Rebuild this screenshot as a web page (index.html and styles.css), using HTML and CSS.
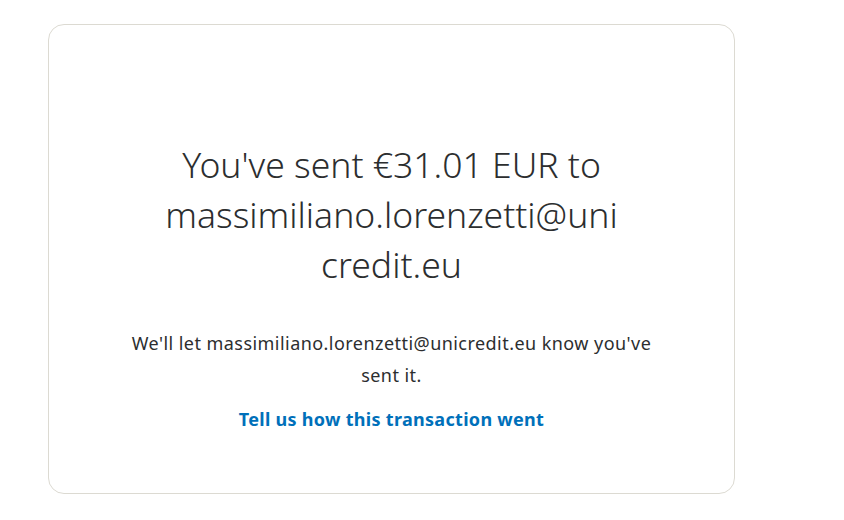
FILE: index.html
```html
<!DOCTYPE html>
<html lang="en">
<head>
<meta charset="utf-8">
<link rel="stylesheet" href="styles.css">
</head>
<body>
<main class="card">
  <h1 class="title">You've sent €31.01 EUR to massimiliano.lorenzetti@unicredit.eu</h1>
  <p class="note">We'll let massimiliano.lorenzetti@unicredit.eu know you've sent it.</p>
  <a class="feedback" href="#">Tell us how this transaction went</a>
</main>
</body>
</html>
```
FILE: styles.css
```css
html, body {
  margin: 0;
  background: #ffffff;
}
body {
  padding: 24px 0 0 48px;
}
.card {
  box-sizing: border-box;
  width: 687px;
  height: 470px;
  border: 1px solid #dcdad2;
  border-radius: 16px;
  display: flex;
  flex-direction: column;
  align-items: center;
  padding-top: 114px;
  text-align: center;
}
.title {
  margin: 0;
  max-width: 464px;
  font-family: "Noto Sans", "Open Sans", sans-serif;
  font-weight: 300;
  font-size: 35.5px;
  line-height: 50px;
  color: #2c2e2f;
  overflow-wrap: anywhere;
}
.note {
  margin: 38px 0 0;
  max-width: 540px;
  font-family: "Noto Sans", "Open Sans", sans-serif;
  font-size: 18px;
  letter-spacing: 0.45px;
  line-height: 32px;
  color: #2c2e2f;
}
.feedback {
  margin-top: 15px;
  font-family: "Noto Sans", "Open Sans", sans-serif;
  font-weight: 700;
  font-size: 18px;
  letter-spacing: 0.3px;
  line-height: 26px;
  color: #0070ba;
  text-decoration: none;
}
```
